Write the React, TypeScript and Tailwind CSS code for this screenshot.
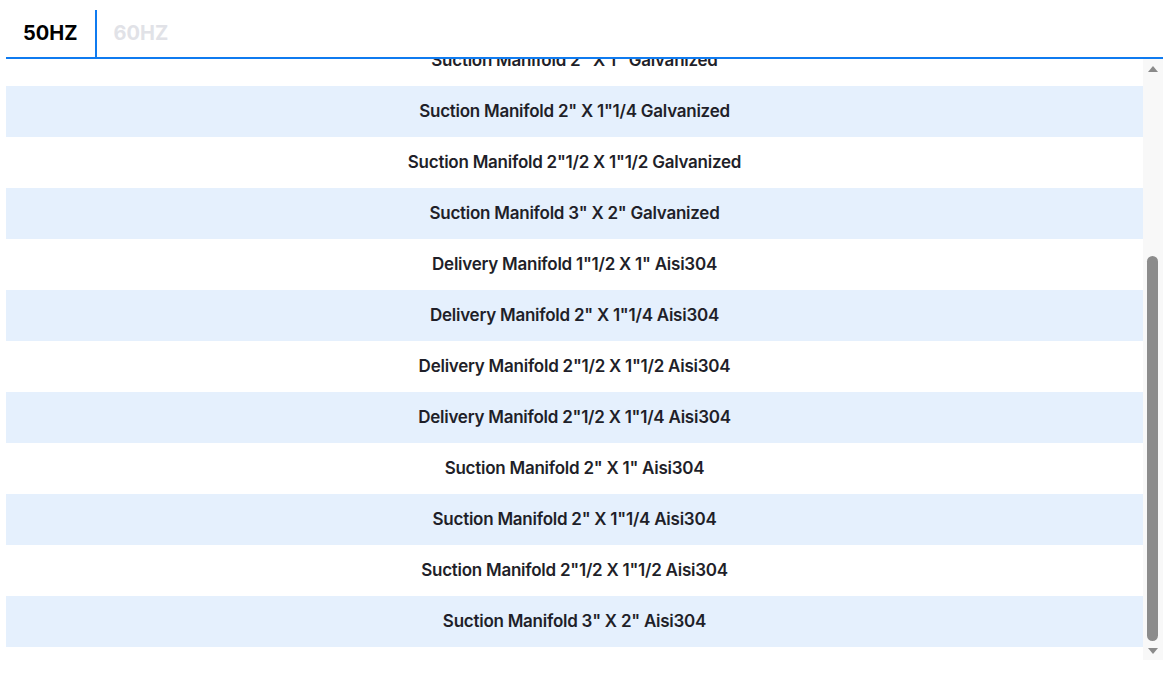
import { useEffect, useRef, useState } from 'react'

const ITEMS = [
  'Delivery Manifold 1"1/4 X 1" Galvanized',
  'Delivery Manifold 1"1/2 X 1" Galvanized',
  'Delivery Manifold 2" X 1"1/4 Galvanized',
  'Delivery Manifold 2"1/2 X 1"1/2 Galvanized',
  'Delivery Manifold 2"1/2 X 1"1/4 Galvanized',
  'Suction Manifold 2" X 1" Galvanized',
  'Suction Manifold 2" X 1"1/4 Galvanized',
  'Suction Manifold 2"1/2 X 1"1/2 Galvanized',
  'Suction Manifold 3" X 2" Galvanized',
  'Delivery Manifold 1"1/2 X 1" Aisi304',
  'Delivery Manifold 2" X 1"1/4 Aisi304',
  'Delivery Manifold 2"1/2 X 1"1/2 Aisi304',
  'Delivery Manifold 2"1/2 X 1"1/4 Aisi304',
  'Suction Manifold 2" X 1" Aisi304',
  'Suction Manifold 2" X 1"1/4 Aisi304',
  'Suction Manifold 2"1/2 X 1"1/2 Aisi304',
  'Suction Manifold 3" X 2" Aisi304',
]

// space taken by the arrow buttons at each end of the track
const ARROW = 19

export default function App() {
  const listRef = useRef<HTMLDivElement>(null)
  const [thumb, setThumb] = useState({ top: 0, height: 0 })

  const syncThumb = () => {
    const el = listRef.current
    if (!el) return
    const range = el.clientHeight - ARROW * 2
    setThumb({
      top: ARROW + (range * el.scrollTop) / el.scrollHeight,
      height: (range * el.clientHeight) / el.scrollHeight,
    })
  }

  useEffect(() => {
    if (listRef.current) {
      listRef.current.scrollTop = listRef.current.scrollHeight
    }
    syncThumb()
  }, [])

  return (
    <div className="h-[682px] bg-white pl-[6px] pr-[2px] pt-[10px] font-['Inter','Liberation_Sans',sans-serif]">
      <div className="flex border-b-2 border-[#0f7bf0]">
        <button
          type="button"
          className="h-[47px] border-r-2 border-[#0f7bf0] px-[17px] pb-[2px] text-[20px] font-bold text-black"
        >
          50HZ
        </button>
        <button
          type="button"
          className="h-[47px] px-[17px] pb-[2px] text-[20px] font-bold text-[#e1e2e7]"
        >
          60HZ
        </button>
      </div>

      <div className="flex h-[601px]">
        <div
          ref={listRef}
          onScroll={syncThumb}
          className="flex-1 overflow-y-auto pb-[13px] [scrollbar-width:none]"
        >
          {ITEMS.map((item, index) => (
            <div
              key={item}
              className={`flex h-[51px] items-center justify-center text-[17px] font-semibold tracking-[-0.25px] text-[#1f1f29] ${
                index % 2 === 0 ? 'bg-[#e5f0fd]' : 'bg-white'
              }`}
            >
              {item}
            </div>
          ))}
        </div>

        <div className="relative w-[20px] bg-[#f8f8f8]">
          <div className="absolute left-1/2 top-[7px] h-0 w-0 -translate-x-1/2 border-x-[5px] border-b-[6px] border-x-transparent border-b-[#8a8a8a]" />
          <div
            className="absolute left-[4px] w-[11px] rounded-full bg-[#8c8c8c]"
            style={{ top: thumb.top, height: thumb.height }}
          />
          <div className="absolute bottom-[6px] left-1/2 h-0 w-0 -translate-x-1/2 border-x-[5px] border-t-[6px] border-x-transparent border-t-[#8a8a8a]" />
        </div>
      </div>
    </div>
  )
}
